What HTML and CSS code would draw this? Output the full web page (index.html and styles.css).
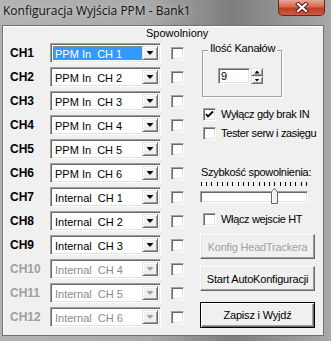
FILE: index.html
```html
<!DOCTYPE html>
<html lang="pl">
<head>
  <meta charset="UTF-8">
  <title>Konfiguracja Wyjścia PPM - Bank1</title>
  <link rel="stylesheet" href="styles.css">
</head>
<body>
<div class="window">
  <div class="titlebar">
    <span class="title">Konfiguracja Wyjścia PPM - Bank1</span>
    <div class="close">
      <svg width="14" height="11" viewBox="0 0 14 11">
        <path d="M3 2 L11 9 M11 2 L3 9" stroke="#4a1a12" stroke-width="4" stroke-linecap="square"/>
        <path d="M3 2 L11 9 M11 2 L3 9" stroke="#fff" stroke-width="2.2" stroke-linecap="square"/>
      </svg>
    </div>
  </div>

  <div class="client">
    <div class="channels">
      <div class="header">Spowolniony</div>

      <div class="row">
        <span class="ch">CH1</span>
        <div class="combo"><span class="value selected">PPM In&nbsp; CH 1</span><span class="drop"><i></i></span></div>
        <span class="check"></span>
      </div>
      <div class="row">
        <span class="ch">CH2</span>
        <div class="combo"><span class="value">PPM In&nbsp; CH 2</span><span class="drop"><i></i></span></div>
        <span class="check"></span>
      </div>
      <div class="row">
        <span class="ch">CH3</span>
        <div class="combo"><span class="value">PPM In&nbsp; CH 3</span><span class="drop"><i></i></span></div>
        <span class="check"></span>
      </div>
      <div class="row">
        <span class="ch">CH4</span>
        <div class="combo"><span class="value">PPM In&nbsp; CH 4</span><span class="drop"><i></i></span></div>
        <span class="check"></span>
      </div>
      <div class="row">
        <span class="ch">CH5</span>
        <div class="combo"><span class="value">PPM In&nbsp; CH 5</span><span class="drop"><i></i></span></div>
        <span class="check"></span>
      </div>
      <div class="row">
        <span class="ch">CH6</span>
        <div class="combo"><span class="value">PPM In&nbsp; CH 6</span><span class="drop"><i></i></span></div>
        <span class="check"></span>
      </div>
      <div class="row">
        <span class="ch">CH7</span>
        <div class="combo"><span class="value">Internal&nbsp; CH 1</span><span class="drop"><i></i></span></div>
        <span class="check"></span>
      </div>
      <div class="row">
        <span class="ch">CH8</span>
        <div class="combo"><span class="value">Internal&nbsp; CH 2</span><span class="drop"><i></i></span></div>
        <span class="check"></span>
      </div>
      <div class="row">
        <span class="ch">CH9</span>
        <div class="combo"><span class="value">Internal&nbsp; CH 3</span><span class="drop"><i></i></span></div>
        <span class="check"></span>
      </div>
      <div class="row disabled">
        <span class="ch">CH10</span>
        <div class="combo"><span class="value">Internal&nbsp; CH 4</span><span class="drop"><i></i></span></div>
        <span class="check"></span>
      </div>
      <div class="row disabled">
        <span class="ch">CH11</span>
        <div class="combo"><span class="value">Internal&nbsp; CH 5</span><span class="drop"><i></i></span></div>
        <span class="check"></span>
      </div>
      <div class="row disabled">
        <span class="ch">CH12</span>
        <div class="combo"><span class="value">Internal&nbsp; CH 6</span><span class="drop"><i></i></span></div>
        <span class="check"></span>
      </div>
    </div>

    <div class="side">
      <div class="group">
        <span class="group-label">Ilość Kanałów</span>
        <div class="spin">
          <div class="edit">9</div>
          <div class="spin-btns">
            <span class="spin-btn"><i class="up"></i></span>
            <span class="spin-btn"><i class="down"></i></span>
          </div>
        </div>
      </div>

      <label class="option first">
        <span class="check checked">
          <svg width="9" height="9" viewBox="0 0 9 9"><path d="M1 4 L3 6.5 L8 1.5" stroke="#000" stroke-width="1.8" fill="none"/></svg>
        </span>
        <span>Wyłącz gdy brak IN</span>
      </label>
      <label class="option">
        <span class="check"></span>
        <span>Tester serw i zasięgu</span>
      </label>

      <div class="speed-label">Szybkość spowolnienia:</div>
      <svg class="ticks" width="108" height="4" viewBox="0 0 108 4">
        <path d="M0.5 0v4M5.5 0v4M10.5 0v4M16.5 0v4M21.5 0v4M26.5 0v4M31.5 0v4M37.5 0v4M42.5 0v4M47.5 0v4M52.5 0v4M58.5 0v4M63.5 0v4M68.5 0v4M73.5 0v4M79.5 0v4M84.5 0v4M89.5 0v4M94.5 0v4M100.5 0v4M105.5 0v4" stroke="#000" stroke-width="1"/>
      </svg>
      <div class="slider">
        <div class="track"></div>
        <svg class="thumb" width="7" height="16" viewBox="0 0 7 16">
          <path d="M0.5 15.5 V4 L3.5 0.5 L6.5 4 V15.5 Z" fill="#f0f0f0" stroke="#696969"/>
          <path d="M1.5 14.5 V4.3 L3.5 2" stroke="#fff" fill="none"/>
        </svg>
      </div>

      <label class="option ht">
        <span class="check"></span>
        <span>Włącz wejscie HT</span>
      </label>

      <div class="btn disabled-btn">Konfig HeadTrackera</div>
      <div class="btn second">Start AutoKonfiguracji</div>
      <div class="btn default">Zapisz i Wyjdź</div>
    </div>
  </div>
</div>
</body>
</html>
```

FILE: styles.css
```css
body {
  margin: 0;
  width: 331px;
  height: 341px;
  overflow: hidden;
  font-family: "Liberation Sans", Arial, sans-serif;
  font-size: 11px;
  color: #000;
  background: linear-gradient(90deg, #b3b3b3 0%, #a9a9a9 45%, #7d7d7d 70%, #8f8f8f 82%, #a8a8a8 100%);
}
.window {
  display: flex;
  flex-direction: column;
}
.titlebar {
  height: 25px;
  display: flex;
  justify-content: space-between;
  align-items: flex-start;
}
.title {
  margin: 3px 0 0 3px;
  font-family: "Open Sans", "Noto Sans", sans-serif;
  font-size: 12px;
  line-height: 16px;
  color: #111;
  text-shadow: 0 0 6px rgba(255, 255, 255, 0.5);
}
.close {
  width: 47px;
  height: 16px;
  margin-right: 6px;
  box-sizing: border-box;
  border: 1px solid #5e2a22;
  border-top: none;
  border-radius: 0 0 5px 5px;
  background: linear-gradient(#e7a695, #d66a52 45%, #c23d22 55%, #cf5a3f 100%);
  display: flex;
  align-items: center;
  justify-content: center;
}
.client {
  margin-left: 2px;
  width: 322px;
  height: 311px;
  box-sizing: border-box;
  border: 1px solid #707070;
  background: #f0f0f0;
  box-shadow: inset 1px 1px 0 #fff;
  display: flex;
}

/* channel list */
.channels {
  width: 197px;
  flex-shrink: 0;
  padding-left: 7px;
  box-sizing: border-box;
}
.header {
  margin: 1px 0 3px;
  padding-left: 136px;
  line-height: 13px;
}
.row {
  display: flex;
  align-items: center;
  height: 20px;
  margin-bottom: 4px;
}
.ch {
  width: 40px;
  font-size: 12px;
  font-weight: bold;
}
.combo {
  width: 111px;
  height: 20px;
  box-sizing: border-box;
  padding: 2px;
  display: flex;
  background: #fff;
  border: 1px solid;
  border-color: #a0a0a0 #fff #fff #a0a0a0;
  box-shadow: inset 1px 1px 0 #696969, inset -1px -1px 0 #e3e3e3;
}
.value {
  flex: 1;
  margin: 0;
  padding-left: 1px;
  line-height: 14px;
  white-space: pre;
  border: 1px solid transparent;
}
.value.selected {
  background: #3399ff;
  color: #fff;
  border: 1px dotted #c08000;
}
.drop {
  width: 16px;
  box-sizing: border-box;
  background: #f0f0f0;
  border: 1px solid;
  border-color: #e3e3e3 #696969 #696969 #e3e3e3;
  box-shadow: inset 1px 1px 0 #fff, inset -1px -1px 0 #a0a0a0;
  display: flex;
  align-items: center;
  justify-content: center;
}
.drop i {
  width: 7px;
  height: 4px;
  background: #000;
  clip-path: polygon(0 0, 100% 0, 50% 100%);
}
.check {
  width: 13px;
  height: 13px;
  margin-left: 10px;
  box-sizing: border-box;
  background: #fff;
  border: 1px solid;
  border-color: #a0a0a0 #fff #fff #a0a0a0;
  box-shadow: inset 1px 1px 0 #696969, inset -1px -1px 0 #e3e3e3;
  display: flex;
  align-items: center;
  justify-content: center;
  flex-shrink: 0;
}
.disabled .ch {
  color: #a0a0a0;
}
.disabled .value {
  color: #8a8a8a;
}
.disabled .drop i {
  background: #a0a0a0;
}

/* right side */
.side {
  width: 120px;
  white-space: nowrap;
  display: flex;
  flex-direction: column;
}
.group {
  position: relative;
  margin: 24px 0 0 2px;
  width: 80px;
  height: 47px;
  box-sizing: border-box;
  border: 1px solid #a0a0a0;
  box-shadow: inset 1px 1px 0 #fff, 1px 1px 0 #fff;
  padding: 17px 0 0 15px;
}
.group-label {
  position: absolute;
  top: -9px;
  left: 5px;
  padding: 0 2px;
  line-height: 13px;
  background: #f0f0f0;
  letter-spacing: -0.2px;
}
.spin {
  display: flex;
}
.edit {
  width: 32px;
  height: 16px;
  box-sizing: border-box;
  line-height: 12px;
  background: #fff;
  border: 1px solid;
  border-color: #a0a0a0 #fff #fff #a0a0a0;
  box-shadow: inset 1px 1px 0 #696969, inset -1px -1px 0 #e3e3e3;
  padding: 1px 0 0 2px;
}
.spin-btns {
  margin-left: 1px;
  display: flex;
  flex-direction: column;
}
.spin-btn {
  width: 12px;
  height: 8px;
  box-sizing: border-box;
  background: #f0f0f0;
  border: 1px solid;
  border-color: #e3e3e3 #696969 #696969 #e3e3e3;
  box-shadow: inset 1px 1px 0 #fff, inset -1px -1px 0 #a0a0a0;
  display: flex;
  align-items: center;
  justify-content: center;
}
.spin-btn i {
  width: 5px;
  height: 3px;
  background: #000;
}
.spin-btn .up {
  clip-path: polygon(50% 0, 100% 100%, 0 100%);
}
.spin-btn .down {
  clip-path: polygon(0 0, 100% 0, 50% 100%);
}
.option {
  display: flex;
  align-items: center;
  height: 13px;
  line-height: 13px;
  margin-top: 6px;
  letter-spacing: -0.35px;
}
.option .check {
  margin: 0 5px 0 3px;
}
.option.first {
  margin-top: 11px;
}
.option.ht {
  margin-top: 10px;
}
.speed-label {
  margin: 26px 0 0 1px;
  line-height: 13px;
  letter-spacing: -0.3px;
}
.ticks {
  display: block;
  margin: 3px 0 0 1px;
  shape-rendering: crispEdges;
}
.slider {
  position: relative;
  margin-top: 5px;
}
.track {
  width: 108px;
  height: 12px;
  box-sizing: border-box;
  background: #fff;
  border: 1px solid;
  border-color: #a0a0a0 #fff #fff #a0a0a0;
  box-shadow: inset 1px 1px 0 #696969, inset -1px -1px 0 #e3e3e3;
}
.thumb {
  position: absolute;
  top: -3px;
  left: 71px;
}
.btn {
  width: 115px;
  height: 25px;
  box-sizing: border-box;
  margin-top: 8px;
  background: #f0f0f0;
  border: 1px solid;
  border-color: #fff #696969 #696969 #fff;
  box-shadow: inset -1px -1px 0 #a0a0a0, inset 1px 1px 0 #e3e3e3;
  display: flex;
  align-items: center;
  justify-content: center;
  letter-spacing: -0.2px;
}
.btn.disabled-btn {
  color: #a0a0a0;
}
.btn.second {
  margin-top: 7px;
}
.btn.default {
  margin-top: 11px;
  height: 26px;
  border: 1px solid #000;
  box-shadow: inset 1px 1px 0 #fff, inset -1px -1px 0 #696969, inset -2px -2px 0 #a0a0a0;
}
```
